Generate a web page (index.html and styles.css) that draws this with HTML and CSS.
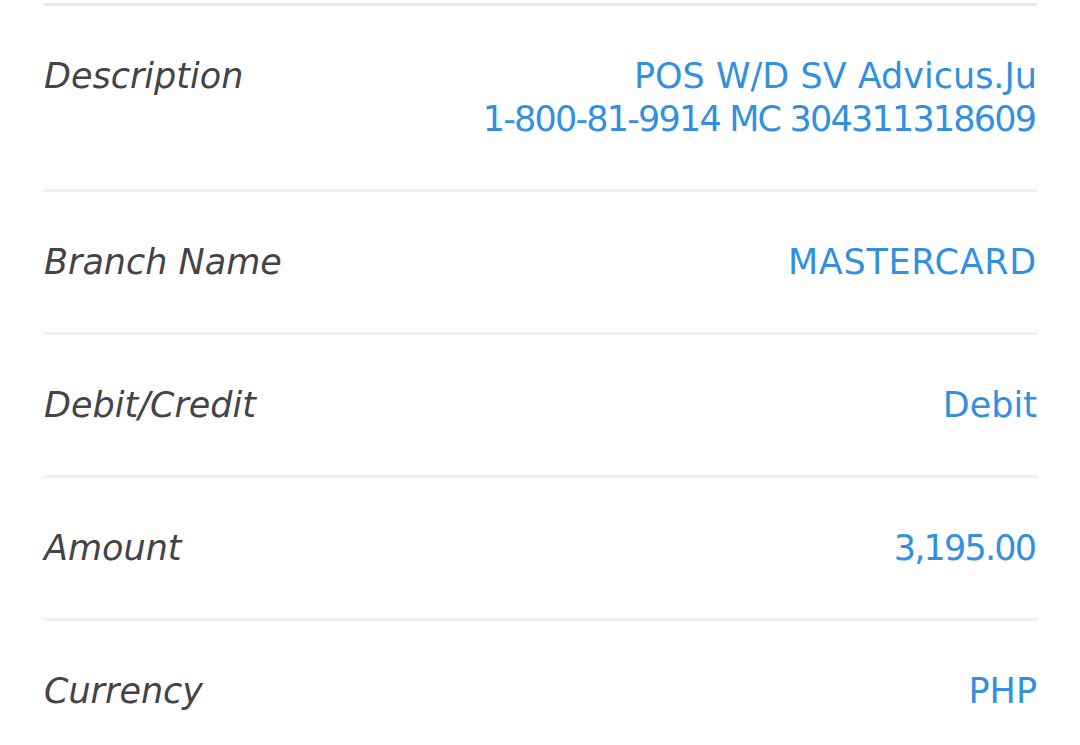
FILE: index.html
```html
<!DOCTYPE html>
<html>
<head>
<meta charset="utf-8">
<link rel="stylesheet" href="styles.css">
</head>
<body>
<div class="card">
  <div class="row">
    <div class="label">Description</div>
    <div class="value">POS W/D SV Advicus.Ju<br><span class="digits">1-800-81-9914 MC 304311318609</span></div>
  </div>
  <div class="row">
    <div class="label">Branch Name</div>
    <div class="value caps">MASTERCARD</div>
  </div>
  <div class="row">
    <div class="label">Debit/Credit</div>
    <div class="value">Debit</div>
  </div>
  <div class="row">
    <div class="label">Amount</div>
    <div class="value"><span class="digits">3,195.00</span></div>
  </div>
  <div class="row">
    <div class="label">Currency</div>
    <div class="value">PHP</div>
  </div>
</div>
</body>
</html>
```
FILE: styles.css
```css
html, body {
  margin: 0;
  padding: 0;
  background: #ffffff;
  overflow: hidden;
}
body {
  padding: 3px 43px 0 44px;
  font-family: "DejaVu Sans", sans-serif;
}
.card {
  border-top: 3px solid #e9e9eb;
  box-shadow: 0 1px 2px rgba(0,0,0,0.04);
}
.row {
  display: flex;
  justify-content: space-between;
  align-items: flex-start;
  padding: 49px 0 48px 0;
  border-bottom: 3px solid #efefef;
  font-size: 35px;
  line-height: 43px;
}
.label {
  font-style: italic;
  color: #444446;
}
.value {
  text-align: right;
  color: #3390de;
}
.digits {
  letter-spacing: -1.8px;
  margin-right: 1.8px;
}
.caps {
  letter-spacing: 0.7px;
}
```
